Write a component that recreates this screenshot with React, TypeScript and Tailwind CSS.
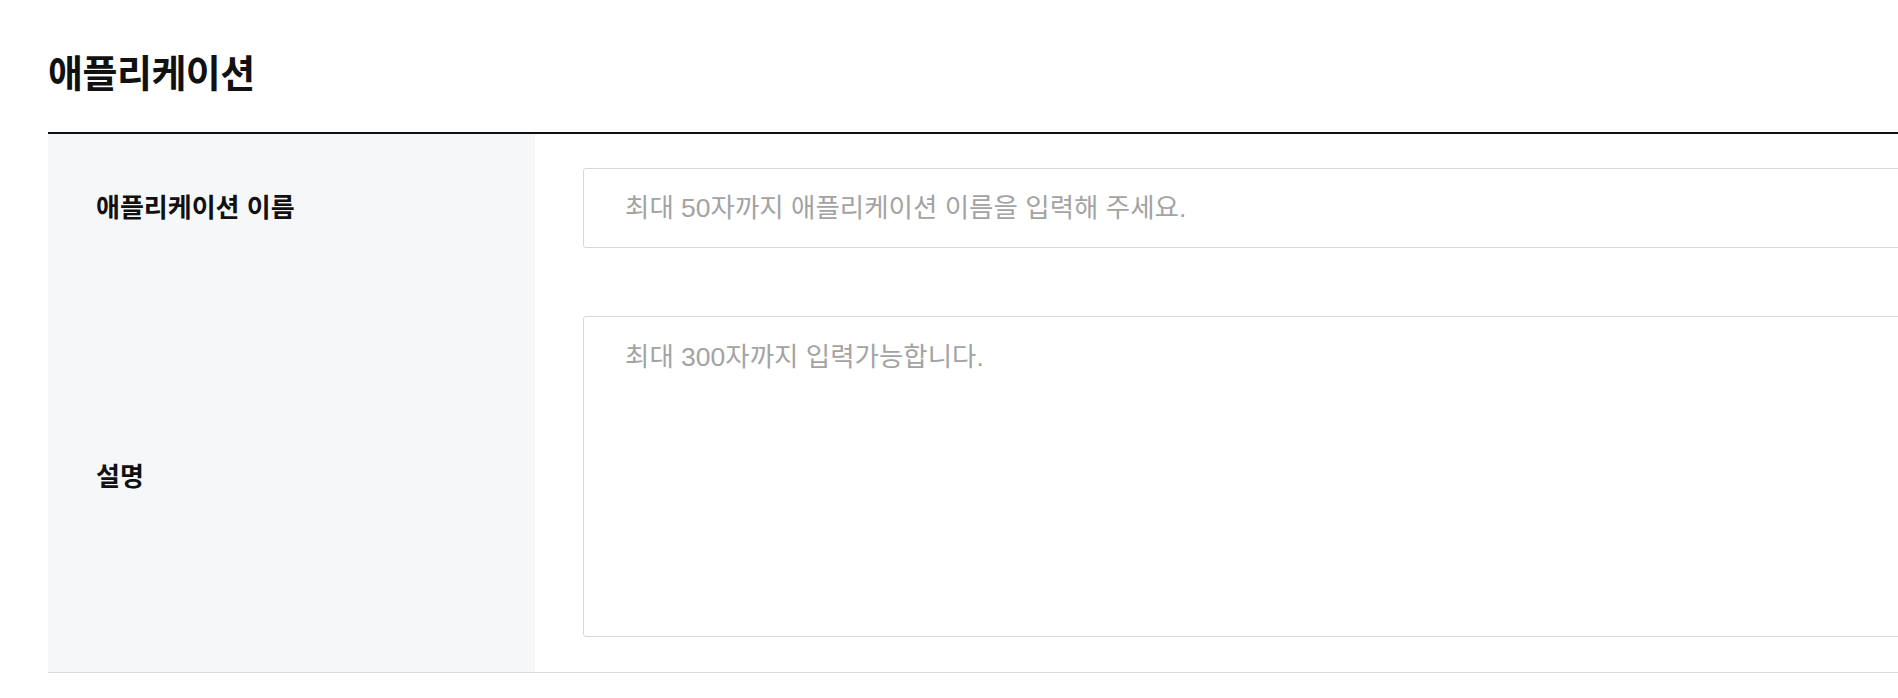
export default function App() {
  const font = { fontFamily: '"Liberation Sans", "Noto Sans CJK KR", sans-serif' };

  return (
    <div className="min-h-screen w-full overflow-hidden bg-white" style={font}>
      <div className="pl-[48px] pt-[50px]">
        <h2 className="text-[38px] leading-[48px] font-bold tracking-[-0.5px] text-[#111]">애플리케이션</h2>

        <div className="mt-[34px] w-[1950px] border-t-2 border-[#111] border-b border-b-[#dcdce0]">
          {/* name row */}
          <div className="flex">
            <div className="flex w-[487px] shrink-0 items-center bg-[#f6f7f9] pl-[48px]">
              <span className="text-[26px] font-bold text-[#111]">애플리케이션 이름</span>
            </div>
            <div className="flex-1 py-[34px] pl-[48px]">
              <input
                type="text"
                placeholder="최대 50자까지 애플리케이션 이름을 입력해 주세요."
                className="h-[80px] w-full rounded-[3px] border border-[#d7d8dc] px-[41px] text-[26.5px] text-[#333] outline-none placeholder:text-[#a3a3a3]"
              />
            </div>
          </div>

          {/* description row */}
          <div className="flex">
            <div className="flex w-[487px] shrink-0 items-center bg-[#f6f7f9] pl-[48px]">
              <span className="text-[26px] font-bold text-[#111]">설명</span>
            </div>
            <div className="flex-1 pt-[34px] pb-[35px] pl-[48px]">
              <textarea
                placeholder="최대 300자까지 입력가능합니다."
                className="block h-[321px] w-full resize-none rounded-[3px] border border-[#d7d8dc] px-[41px] pt-[22px] text-[26.5px] leading-[36px] text-[#333] outline-none placeholder:text-[#a3a3a3]"
              />
            </div>
          </div>
        </div>
      </div>
    </div>
  );
}
